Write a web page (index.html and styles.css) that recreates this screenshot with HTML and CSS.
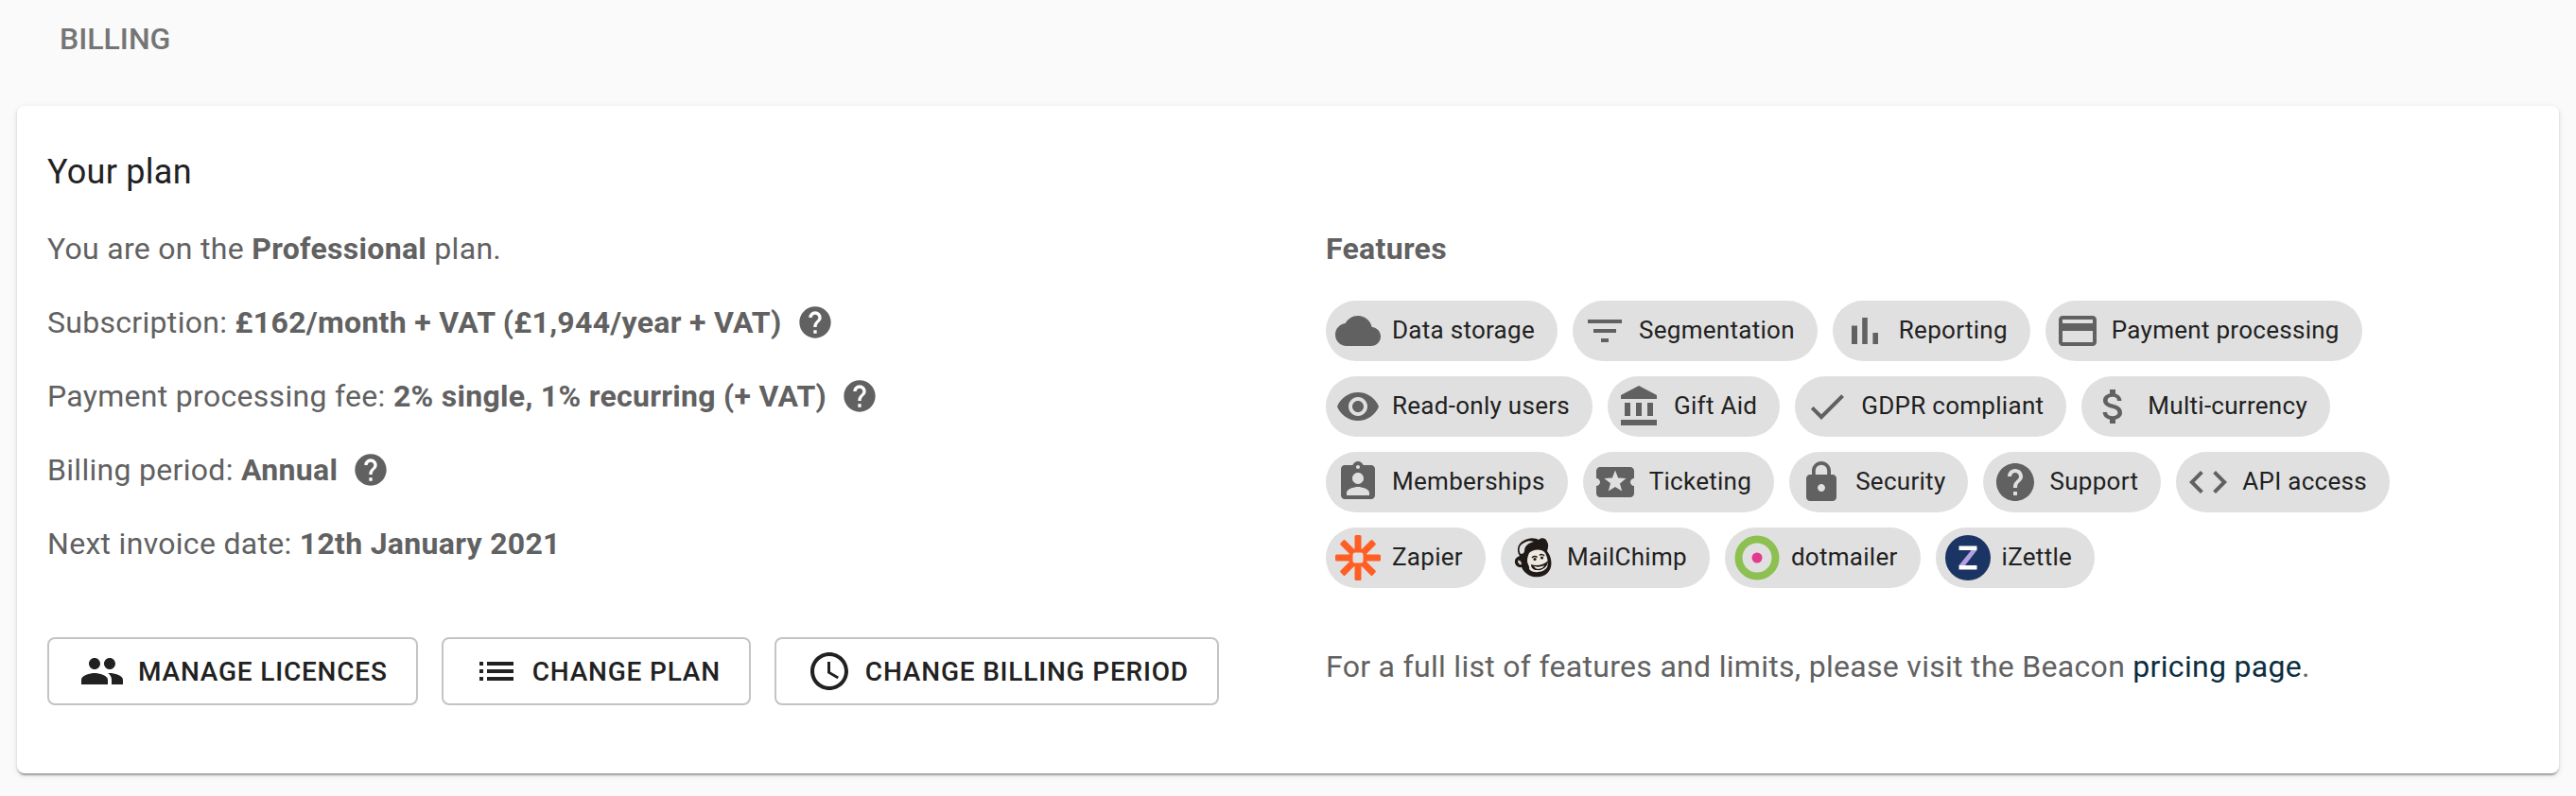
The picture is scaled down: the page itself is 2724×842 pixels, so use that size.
FILE: index.html
```html
<!DOCTYPE html>
<html lang="en">
<head>
<meta charset="utf-8">
<title>Billing</title>
<link rel="stylesheet" href="styles.css">
</head>
<body>
<svg class="defs" width="0" height="0" aria-hidden="true">
  <symbol id="i-cloud" viewBox="0 0 24 24"><path d="M19.35 10.04C18.67 6.59 15.64 4 12 4 9.11 4 6.6 5.64 5.35 8.04 2.34 8.36 0 10.91 0 14c0 3.31 2.69 6 6 6h13c2.76 0 5-2.24 5-5 0-2.64-2.05-4.78-4.65-4.96z"/></symbol>
  <symbol id="i-filter" viewBox="0 0 24 24"><path d="M10 18h4v-2h-4v2zM3 6v2h18V6H3zm3 7h12v-2H6v2z"/></symbol>
  <symbol id="i-bar" viewBox="0 0 24 24"><path d="M5 9.2h3V19H5zM10.6 5h2.8v14h-2.8zm5.6 8H19v6h-2.8z"/></symbol>
  <symbol id="i-card" viewBox="0 0 24 24"><path d="M20 4H4c-1.11 0-1.99.89-1.99 2L2 18c0 1.11.89 2 2 2h16c1.11 0 2-.89 2-2V6c0-1.11-.89-2-2-2zm0 14H4v-6h16v6zm0-10H4V6h16v2z"/></symbol>
  <symbol id="i-eye" viewBox="0 0 24 24"><path d="M12 4.5C7 4.5 2.73 7.61 1 12c1.73 4.39 6 7.5 11 7.5s9.27-3.11 11-7.5c-1.73-4.39-6-7.5-11-7.5zM12 17c-2.76 0-5-2.24-5-5s2.24-5 5-5 5 2.24 5 5-2.24 5-5 5zm0-8c-1.66 0-3 1.34-3 3s1.34 3 3 3 3-1.34 3-3-1.34-3-3-3z"/></symbol>
  <symbol id="i-bank" viewBox="0 0 24 24"><path d="M4 10v7h3v-7H4zm6 0v7h3v-7h-3zM2 22h19v-3H2v3zm14-12v7h3v-7h-3zm-4.5-9L2 6v2h19V6l-9.5-5z"/></symbol>
  <symbol id="i-check" viewBox="0 0 24 24"><path d="M9 16.17L4.83 12l-1.42 1.41L9 19 21 7l-1.41-1.41z"/></symbol>
  <symbol id="i-money" viewBox="0 0 24 24"><path d="M11.8 10.9c-2.27-.59-3-1.2-3-2.15 0-1.09 1.01-1.85 2.7-1.85 1.78 0 2.44.85 2.5 2.1h2.21c-.07-1.72-1.12-3.3-3.21-3.81V3h-3v2.16c-1.94.42-3.5 1.68-3.5 3.61 0 2.31 1.91 3.46 4.7 4.13 2.5.6 3 1.48 3 2.41 0 .69-.49 1.79-2.7 1.79-2.06 0-2.87-.92-2.98-2.1h-2.2c.12 2.19 1.76 3.42 3.68 3.83V21h3v-2.15c1.95-.37 3.5-1.5 3.5-3.55 0-2.84-2.43-3.81-4.7-4.4z"/></symbol>
  <symbol id="i-member" viewBox="0 0 24 24"><path d="M19 3h-4.18C14.4 1.84 13.3 1 12 1c-1.3 0-2.4.84-2.82 2H5c-1.1 0-2 .9-2 2v14c0 1.1.9 2 2 2h14c1.1 0 2-.9 2-2V5c0-1.1-.9-2-2-2zm-7 0c.55 0 1 .45 1 1s-.45 1-1 1-1-.45-1-1 .45-1 1-1zm0 4c1.66 0 3 1.34 3 3s-1.34 3-3 3-3-1.34-3-3 1.34-3 3-3zm6 12H6v-1.4c0-2 4-3.1 6-3.1s6 1.1 6 3.1V19z"/></symbol>
  <symbol id="i-ticket" viewBox="0 0 24 24"><path d="M20 12c0-1.1.9-2 2-2V6c0-1.1-.9-2-2-2H4c-1.1 0-1.99.9-1.99 2v4c1.1 0 1.99.9 1.99 2s-.89 2-2 2v4c0 1.1.9 2 2 2h16c1.1 0 2-.9 2-2v-4c-1.1 0-2-.9-2-2zm-4.42 4.8L12 14.5l-3.58 2.3 1.08-4.12-3.29-2.69 4.24-.25L12 5.8l1.54 3.95 4.24.25-3.29 2.69 1.09 4.11z"/></symbol>
  <symbol id="i-lock" viewBox="0 0 24 24"><path d="M18 8h-1V6c0-2.76-2.24-5-5-5S7 3.24 7 6v2H6c-1.1 0-2 .9-2 2v10c0 1.1.9 2 2 2h12c1.1 0 2-.9 2-2V10c0-1.1-.9-2-2-2zm-6 9c-1.1 0-2-.9-2-2s.9-2 2-2 2 .9 2 2-.9 2-2 2zm3.1-9H8.9V6c0-1.71 1.39-3.1 3.1-3.1 1.71 0 3.1 1.39 3.1 3.1v2z"/></symbol>
  <symbol id="i-help" viewBox="0 0 24 24"><path d="M12 2C6.48 2 2 6.48 2 12s4.48 10 10 10 10-4.48 10-10S17.52 2 12 2zm1 17h-2v-2h2v2zm2.07-7.75l-.9.92C13.45 12.9 13 13.5 13 15h-2v-.5c0-1.1.45-2.1 1.17-2.83l1.24-1.26c.37-.36.59-.86.59-1.41 0-1.1-.9-2-2-2s-2 .9-2 2H8c0-2.21 1.79-4 4-4s4 1.79 4 4c0 .88-.36 1.68-.93 2.25z"/></symbol>
  <symbol id="i-code" viewBox="0 0 24 24"><path d="M9.4 16.6L4.8 12l4.6-4.6L8 6l-6 6 6 6 1.4-1.4zm5.2 0l4.6-4.6-4.6-4.6L16 6l6 6-6 6-1.4-1.4z"/></symbol>
  <symbol id="i-people" viewBox="0 0 24 24"><path d="M16 11c1.66 0 2.99-1.34 2.99-3S17.66 5 16 5c-1.66 0-3 1.34-3 3s1.34 3 3 3zm-8 0c1.66 0 2.99-1.34 2.99-3S9.66 5 8 5C6.34 5 5 6.34 5 8s1.34 3 3 3zm0 2c-2.33 0-7 1.17-7 3.5V19h14v-2.5c0-2.33-4.67-3.5-7-3.5zm8 0c-.29 0-.62.02-.97.05 1.16.84 1.97 1.97 1.97 3.45V19h6v-2.5c0-2.33-4.67-3.5-7-3.5z"/></symbol>
  <symbol id="i-list" viewBox="0 0 24 24"><path d="M3 13h2v-2H3v2zm0 4h2v-2H3v2zm0-8h2V7H3v2zm4 4h14v-2H7v2zm0 4h14v-2H7v2zM7 7v2h14V7H7z"/></symbol>
  <symbol id="i-time" viewBox="0 0 24 24"><path d="M11.99 2C6.47 2 2 6.48 2 12s4.47 10 9.99 10C17.52 22 22 17.52 22 12S17.52 2 11.99 2zM12 20c-4.42 0-8-3.58-8-8s3.58-8 8-8 8 3.58 8 8-3.58 8-8 8zm.5-13H11v6l5.25 3.15.75-1.23-4.5-2.67z"/></symbol>
</svg>

<header class="page-head"><h1 class="page-title">BILLING</h1></header>

<main class="card">
  <section class="plan">
    <h2 class="plan-title">Your plan</h2>
    <p class="row">You are on the <b>Professional</b> plan.</p>
    <p class="row">Subscription: <b>£162/month + VAT (£1,944/year + VAT)</b><svg class="help"><use href="#i-help"/></svg></p>
    <p class="row">Payment processing fee: <b>2% single, 1% recurring (+ VAT)</b><svg class="help"><use href="#i-help"/></svg></p>
    <p class="row">Billing period: <b>Annual</b><svg class="help"><use href="#i-help"/></svg></p>
    <p class="row">Next invoice date: <b>12th January 2021</b></p>
    <div class="actions">
      <button class="btn"><svg class="btn-icon"><use href="#i-people"/></svg>MANAGE LICENCES</button>
      <button class="btn"><svg class="btn-icon"><use href="#i-list"/></svg>CHANGE PLAN</button>
      <button class="btn"><svg class="btn-icon"><use href="#i-time"/></svg>CHANGE BILLING PERIOD</button>
    </div>
  </section>

  <section class="features">
    <h3 class="features-title">Features</h3>
    <div class="chips">
      <span class="chip"><svg class="chip-icon"><use href="#i-cloud"/></svg>Data storage</span>
      <span class="chip"><svg class="chip-icon"><use href="#i-filter"/></svg>Segmentation</span>
      <span class="chip"><svg class="chip-icon"><use href="#i-bar"/></svg>Reporting</span>
      <span class="chip"><svg class="chip-icon"><use href="#i-card"/></svg>Payment processing</span>
    </div>
    <div class="chips">
      <span class="chip"><svg class="chip-icon"><use href="#i-eye"/></svg>Read-only users</span>
      <span class="chip"><svg class="chip-icon"><use href="#i-bank"/></svg>Gift Aid</span>
      <span class="chip"><svg class="chip-icon"><use href="#i-check"/></svg>GDPR compliant</span>
      <span class="chip"><svg class="chip-icon"><use href="#i-money"/></svg>Multi-currency</span>
    </div>
    <div class="chips">
      <span class="chip"><svg class="chip-icon"><use href="#i-member"/></svg>Memberships</span>
      <span class="chip"><svg class="chip-icon"><use href="#i-ticket"/></svg>Ticketing</span>
      <span class="chip"><svg class="chip-icon"><use href="#i-lock"/></svg>Security</span>
      <span class="chip"><svg class="chip-icon"><use href="#i-help"/></svg>Support</span>
      <span class="chip"><svg class="chip-icon"><use href="#i-code"/></svg>API access</span>
    </div>
    <div class="chips">
      <span class="chip"><svg class="chip-icon" viewBox="0 0 48 48"><g fill="#ff5f24"><rect x="20.5" y="0" width="7" height="48" rx="1.5"/><rect x="0" y="20.5" width="48" height="7" rx="1.5"/><rect x="20.5" y="0" width="7" height="48" rx="1.5" transform="rotate(45 24 24)"/><rect x="20.5" y="0" width="7" height="48" rx="1.5" transform="rotate(-45 24 24)"/><circle cx="24" cy="24" r="10"/></g><rect x="18.5" y="18.5" width="11" height="11" rx="2.5" fill="#e0e0e0"/></svg>Zapier</span>
      <span class="chip"><svg class="chip-icon" viewBox="0 0 48 48">
        <path d="M10 22C6 16 8 9 14 6C20 2 27 3 30 5C33 2 38 3 39 7C41 10 40 14 39 17C44 23 45 33 41 38C37 45 25 46 19 42C15 39 13 37 12 34C8 35 4 31 5 27C5 25 7 23 10 22Z" fill="#1f1a17"/>
        <path d="M11 20C8 15 10 10 15 8C18 6 22 6 25 7C20 8 15 11 15 17C15 19 13 20 11 20Z" fill="#e0e0e0"/>
        <path d="M20 19C24 15 33 14 37 19C39 23 41 29 39 34C35 40 24 41 20 36C21 33 18 31 18 27C18 24 19 21 20 19Z" fill="#eee9df"/>
        <path d="M22 31C28 33 35 32 40 27C40 34 33 38 28 37C25 37 22 35 22 31Z" fill="#1f1a17"/>
        <path d="M25 33C29 34.200 33 33.800 36 32C35 35 31 36 29 35.800C27 35.500 25.800 34.500 25 33Z" fill="#fff"/>
        <path d="M23 24C24.500 22 27 22 28.500 23.500M31 21.500C32.500 20 35 20.500 36 22" fill="none" stroke="#1f1a17" stroke-width="1.500"/>
        <circle cx="33.500" cy="24" r="1.600" fill="#1f1a17"/><circle cx="26" cy="25.500" r="1.600" fill="#1f1a17"/>
        <path d="M8 27C10 26 12 28 12 31C10 32 8 30 8 27Z" fill="#d8d2c6"/>
      </svg>MailChimp</span>
      <span class="chip"><svg class="chip-icon" viewBox="0 0 48 48"><circle cx="24" cy="24" r="19.500" fill="#e0e0e0" stroke="#8cc152" stroke-width="8"/><circle cx="24" cy="24" r="5.500" fill="#e23a8f"/></svg>dotmailer</span>
      <span class="chip"><svg class="chip-icon" viewBox="0 0 48 48"><circle cx="24" cy="24" r="24" fill="#1a3563"/><path d="M14.500 11.500h19v4.500h-19zM14.500 32h19v4.500h-19z" fill="#fff"/><path d="M27.500 16h6L21 32h-6.500z" fill="#b3a0e0"/></svg>iZettle</span>
    </div>
    <p class="note">For a full list of features and limits, please visit the Beacon <a class="link" href="#">pricing page</a>.</p>
  </section>
</main>
</body>
</html>
```

FILE: styles.css
```css
* { box-sizing: border-box; }
html, body { margin: 0; }
body {
  height: 842px;
  overflow: hidden;
  background: #fafafa;
  font-family: Roboto, "Liberation Sans", sans-serif;
  color: #616161;
  padding: 0 18px;
}
.defs { position: absolute; }
.page-head { height: 112px; padding: 23px 45px 0; }
.page-title {
  margin: 0;
  font-size: 32px;
  line-height: 36px;
  font-weight: 500;
  color: #757575;
}
.card {
  display: grid;
  grid-template-columns: 1352px 1fr;
  height: 706px;
  padding: 0 32px;
  background: #fff;
  border-radius: 8px;
  box-shadow: 0 4px 2px -2px rgba(0,0,0,.2), 0 2px 2px rgba(0,0,0,.14), 0 2px 6px rgba(0,0,0,.12);
}
.plan-title {
  margin: 0;
  padding-top: 46px;
  height: 112px;
  font-size: 36px;
  line-height: 48px;
  font-weight: 400;
  letter-spacing: .27px;
  color: #212121;
}
.row {
  display: flex;
  align-items: center;
  white-space: pre-wrap;
  margin: 0;
  height: 78px;
  font-size: 32px;
  line-height: 40px;
  letter-spacing: .3px;
}
.row b { font-weight: 700; }
.help { width: 40px; height: 40px; margin-left: 15px; fill: #616161; }
.actions { display: flex; gap: 25px; margin-top: 60px; }
.btn {
  display: flex;
  align-items: center;
  gap: 14px;
  height: 72px;
  padding: 0 30px 0 32px;
  background: #fff;
  border: 2px solid #c4c4c4;
  border-radius: 8px;
  font: 500 28px Roboto, "Liberation Sans", sans-serif;
  letter-spacing: .8px;
  color: #212121;
}
.btn-icon { width: 48px; height: 48px; fill: #212121; }
.features-title {
  margin: 0;
  padding-top: 131px;
  height: 206px;
  font-size: 32px;
  line-height: 40px;
  font-weight: 700;
  letter-spacing: .3px;
  color: #616161;
}
.chips { display: flex; gap: 16px; margin-bottom: 16px; }
.chip {
  display: flex;
  align-items: center;
  gap: 12px;
  height: 64px;
  padding: 0 24px 2px 10px;
  border-radius: 32px;
  background: #e0e0e0;
  font-size: 26px;
  letter-spacing: .28px;
  color: #212121;
  white-space: nowrap;
}
.chip-icon { width: 48px; height: 48px; fill: #616161; margin-bottom: -2px; }
.note { margin: 59px 0 0; font-size: 32px; line-height: 48px; letter-spacing: .3px; }
.link { color: #0b2e40; text-decoration: none; }
```
